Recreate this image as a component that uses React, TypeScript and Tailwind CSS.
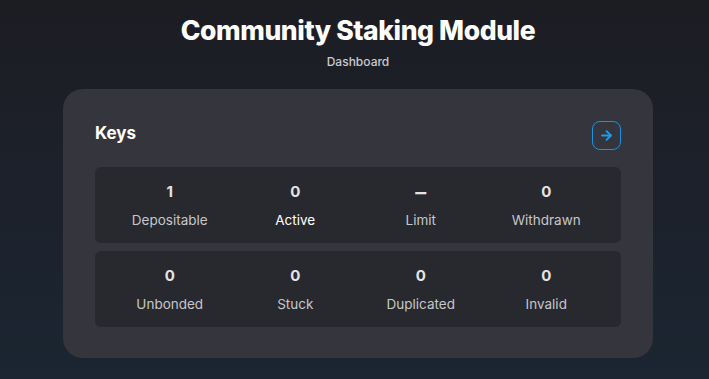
import { ArrowRight } from "lucide-react";

const rows = [
  [
    { value: "1", label: "Depositable" },
    { value: "0", label: "Active", highlight: true },
    { value: "–", label: "Limit", dash: true },
    { value: "0", label: "Withdrawn" },
  ],
  [
    { value: "0", label: "Unbonded" },
    { value: "0", label: "Stuck" },
    { value: "0", label: "Duplicated" },
    { value: "0", label: "Invalid" },
  ],
];

export default function App() {
  return (
    <div
      className="flex min-h-screen flex-col items-center bg-gradient-to-b from-[#1c1d23] via-[#1c212b] to-[#1b2632] pl-[7px] text-white"
      style={{ fontFamily: "Inter, 'Noto Sans', sans-serif" }}
    >
      <h1 className="mt-[11px] text-[26.5px] font-extrabold leading-[38px] tracking-[-0.4px]">
        Community Staking Module
      </h1>
      <p className="mt-[5px] text-[12px] font-medium leading-4 text-[#c9c9cf]">
        Dashboard
      </p>

      <section className="mt-[19px] w-[590px] rounded-[20px] bg-[#35353d] px-8 pb-[31px] pt-8">
        <div className="flex h-[29px] items-center justify-between">
          <h2 className="pb-[3px] text-[17px] font-bold">Keys</h2>
          <button
            type="button"
            className="flex h-[29px] w-[29px] items-center justify-center rounded-[8px] border-[1.5px] border-[#1b8fe2] text-[#1c9bf0]"
          >
            <ArrowRight className="h-[15px] w-[15px]" strokeWidth={3} />
          </button>
        </div>

        <div className="mt-[17px] flex flex-col gap-2">
          {rows.map((row, i) => (
            <div
              key={i}
              className="grid h-[76px] grid-cols-4 rounded-[6px] bg-[#28292e] px-3 pt-[13px]"
            >
              {row.map((item) => (
                <div key={item.label} className="flex flex-col items-center">
                  <span
                    className={
                      item.dash
                        ? "text-[22px] font-semibold leading-6 text-[#e4e4e7]"
                        : "text-[15px] font-bold leading-6 text-[#e4e4e7]"
                    }
                  >
                    {item.value}
                  </span>
                  <span
                    className={
                      item.highlight
                        ? "mt-[6px] text-[13.5px] leading-5 text-white"
                        : "mt-[6px] text-[13.5px] leading-5 text-[#c6c6cc]"
                    }
                  >
                    {item.label}
                  </span>
                </div>
              ))}
            </div>
          ))}
        </div>
      </section>
    </div>
  );
}
